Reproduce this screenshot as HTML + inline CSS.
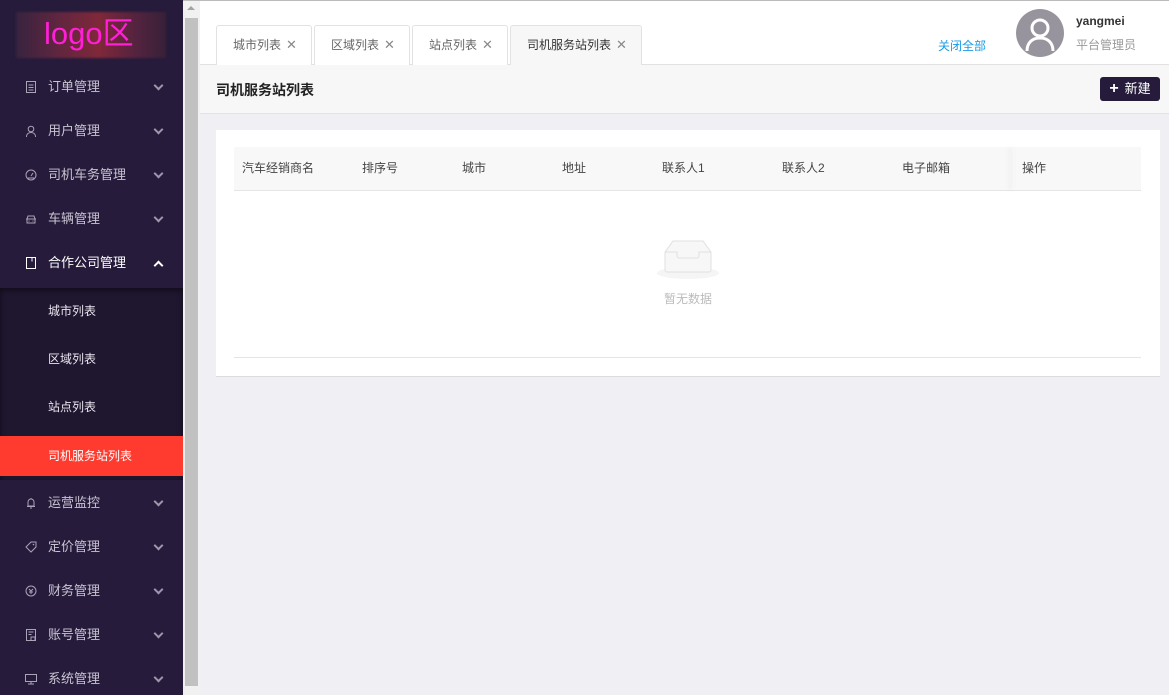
<!DOCTYPE html>
<html><head><meta charset="utf-8"><style>
*{margin:0;padding:0;box-sizing:border-box}
html,body{width:1169px;height:695px;overflow:hidden}
body{background:#f0f0f4;font-family:"Liberation Sans","Noto Sans CJK SC",sans-serif;font-size:13px;position:relative}
.a{position:absolute}
#side{left:0;top:0;width:183px;height:695px;background:#261b3b}
.mi{position:absolute;left:0;width:183px;height:44px;line-height:44px;color:#c8c4d2;font-size:13px}
.mi .t{position:absolute;left:48px}
.mi .ic{position:absolute;left:25px;top:16px;width:12px;height:12px}
.mi .ch{position:absolute;left:155px;top:17px;width:7px;height:7px;border-right:2px solid #9d96ad;border-bottom:2px solid #9d96ad;transform:rotate(45deg)}
.si{position:absolute;left:0;width:183px;height:48px;line-height:48px;color:#e8e6ee;font-size:12px;padding-left:48px}
.tab{position:absolute;top:25px;height:40px;border:1px solid #e2e2e2;border-bottom:none;border-radius:3px 3px 0 0;background:#fff;line-height:38px;color:#666;font-size:12px;padding-left:16px}
.tab .x{color:#888;font-size:13px;margin-left:5px}
.th{position:absolute;top:0;line-height:43px;color:#444;font-size:12px}
</style></head><body>
<div class="a" style="left:0;top:0;width:1169px;height:1px;background:#bbb"></div>
<div id="side" class="a">
 <div class="a" style="left:16px;top:12px;width:150px;height:46px;background:linear-gradient(90deg,#3a2540,#6a2840 30%,#8a2a3a 55%,#5a2440 80%,#3a2238);filter:blur(1px);opacity:.9"></div>
 <div class="a" style="left:44px;top:14px;color:#ff1fd6;font-size:31px;line-height:40px">logo区</div>
 <div class="mi" style="top:65px"><svg class="ic" viewBox="0 0 12 12"><rect x="1.5" y=".5" width="9" height="11" fill="none" stroke="#aaa4b8"/><path d="M3.5 4h5M3.5 6.5h5M3.5 9h5" stroke="#aaa4b8"/></svg><span class="t">订单管理</span><i class="ch"></i></div>
 <div class="mi" style="top:109px"><svg class="ic" viewBox="0 0 12 12"><circle cx="6" cy="4" r="2.8" fill="none" stroke="#aaa4b8"/><path d="M1.5 12c0-3 2-4.5 4.5-4.5S10.5 9 10.5 12" fill="none" stroke="#aaa4b8"/></svg><span class="t">用户管理</span><i class="ch"></i></div>
 <div class="mi" style="top:153px"><svg class="ic" viewBox="0 0 12 12"><circle cx="6" cy="6" r="5" fill="none" stroke="#aaa4b8"/><path d="M6 7L8 4M3 9h6" stroke="#aaa4b8"/></svg><span class="t">司机车务管理</span><i class="ch"></i></div>
 <div class="mi" style="top:197px"><svg class="ic" viewBox="0 0 12 12"><path d="M2 6l1-3h6l1 3v4H2zM1 6h10M3.5 8h1M7.5 8h1" fill="none" stroke="#aaa4b8"/></svg><span class="t">车辆管理</span><i class="ch"></i></div>
 <div class="mi" style="top:241px;color:#fff"><svg class="ic" viewBox="0 0 12 12"><rect x="1.5" y=".5" width="9" height="11" fill="none" stroke="#fff"/><path d="M7 .5v4" stroke="#fff"/></svg><span class="t">合作公司管理</span><i class="ch" style="top:21px;transform:rotate(225deg);border-color:#fff"></i></div>
 <div class="a" style="left:0;top:288px;width:183px;height:192px;background:#1f1630;box-shadow:inset 0 2px 6px rgba(0,0,0,.5)"></div>
 <div class="si" style="top:287px">城市列表</div>
 <div class="si" style="top:335px">区域列表</div>
 <div class="si" style="top:383px">站点列表</div>
 <div class="si" style="top:436px;height:40px;line-height:40px;background:#ff3b2f;color:#fff">司机服务站列表</div>
 <div class="mi" style="top:481px"><svg class="ic" viewBox="0 0 12 12"><path d="M3 9V5a3 3 0 016 0v4zM2 9.5h8M5 11h2M6 1v1" fill="none" stroke="#aaa4b8"/></svg><span class="t">运营监控</span><i class="ch"></i></div>
 <div class="mi" style="top:525px"><svg class="ic" viewBox="0 0 12 12"><path d="M6 1h5v5l-5 5-5-5z" fill="none" stroke="#aaa4b8"/><circle cx="8.5" cy="3.5" r=".8" fill="#aaa4b8"/></svg><span class="t">定价管理</span><i class="ch"></i></div>
 <div class="mi" style="top:569px"><svg class="ic" viewBox="0 0 12 12"><circle cx="6" cy="6" r="5" fill="none" stroke="#aaa4b8"/><path d="M4 4l2 2 2-2M6 6v3M4 7h4" fill="none" stroke="#aaa4b8"/></svg><span class="t">财务管理</span><i class="ch"></i></div>
 <div class="mi" style="top:613px"><svg class="ic" viewBox="0 0 12 12"><rect x="1.5" y=".5" width="9" height="11" fill="none" stroke="#aaa4b8"/><path d="M3.5 3h5M3.5 5.5h3M6 8h4v3.5H6z" fill="none" stroke="#aaa4b8"/></svg><span class="t">账号管理</span><i class="ch"></i></div>
 <div class="mi" style="top:657px"><svg class="ic" viewBox="0 0 12 12"><rect x=".5" y="1.5" width="11" height="7" fill="none" stroke="#aaa4b8"/><path d="M6 8.5v2M3 11h6" stroke="#aaa4b8"/></svg><span class="t">系统管理</span><i class="ch"></i></div>
</div>
<div class="a" style="left:183px;top:1px;width:17px;height:694px;background:#f1f1f1"></div>
<div class="a" style="left:185px;top:18px;width:13px;height:668px;background:#c1c1c1"></div>
<div class="a" style="left:187px;top:6px;width:0;height:0;border-left:4px solid transparent;border-right:4px solid transparent;border-bottom:4px solid #a3a3a3"></div>

<div class="a" style="left:200px;top:1px;width:969px;height:64px;background:#fff;border-bottom:1px solid #e2e2e2"></div>
<div class="tab" style="left:216px;width:96px">城市列表<span class="x">✕</span></div>
<div class="tab" style="left:314px;width:96px">区域列表<span class="x">✕</span></div>
<div class="tab" style="left:412px;width:96px">站点列表<span class="x">✕</span></div>
<div class="tab" style="left:510px;width:132px;background:#f7f7f7;color:#333;height:41px">司机服务站列表<span class="x">✕</span></div>
<div class="a" style="left:938px;top:37px;color:#1a9be6;font-size:12px">关闭全部</div>
<div class="a" style="left:1016px;top:9px;width:48px;height:48px;border-radius:50%;background:#98949e;overflow:hidden"><svg width="48" height="48" viewBox="0 0 48 48"><circle cx="24" cy="19" r="8" fill="none" stroke="#fff" stroke-width="3"/><path d="M11 42c0-9 6-13 13-13s13 4 13 13" fill="none" stroke="#fff" stroke-width="3"/></svg></div>
<div class="a" style="left:1076px;top:14px;color:#333;font-weight:bold;font-size:12px">yangmei</div>
<div class="a" style="left:1076px;top:36px;color:#999;font-size:12px">平台管理员</div>

<div class="a" style="left:200px;top:65px;width:969px;height:49px;background:#f7f7f7;border-bottom:1px solid #e2e2e2"></div>
<div class="a" style="left:216px;top:80px;color:#222;font-weight:bold;font-size:14px">司机服务站列表</div>
<div class="a" style="left:1100px;top:77px;width:60px;height:24px;background:#261b3b;border-radius:3px;color:#fff;font-size:13px;line-height:24px;text-align:center"><b style="font-size:16px;margin-right:6px">+</b>新建</div>

<div class="a" style="left:216px;top:130px;width:944px;height:247px;background:#fff;border-bottom:1px solid #dcdce0">
 <div class="a" style="left:18px;top:17px;width:907px;height:44px;background:#f8f8f8;border-bottom:1px solid #e5e5e5">
  <div class="th" style="left:8px">汽车经销商名</div>
  <div class="th" style="left:128px">排序号</div>
  <div class="th" style="left:228px">城市</div>
  <div class="th" style="left:328px">地址</div>
  <div class="th" style="left:428px">联系人1</div>
  <div class="th" style="left:548px">联系人2</div>
  <div class="th" style="left:668px">电子邮箱</div>
  <div class="a" style="left:779px;top:0;width:1px;height:43px;box-shadow:-3px 0 6px rgba(0,0,0,.15)"></div>
  <div class="th" style="left:788px">操作</div>
 </div>
 <svg class="a" style="left:440px;top:108px" width="64" height="44" viewBox="0 0 64 44"><ellipse cx="32" cy="35" rx="31" ry="6" fill="#f5f5f5"/><path d="M9 14l8-11h30l8 11v18a2 2 0 01-2 2H11a2 2 0 01-2-2z" fill="#f7f7f7" stroke="#e0e0e0"/><path d="M9 14h12v4a2 2 0 002 2h18a2 2 0 002-2v-4h12" fill="none" stroke="#e0e0e0"/></svg>
 <div class="a" style="left:448px;top:160px;color:#bbb;font-size:12px">暂无数据</div>
 <div class="a" style="left:18px;top:227px;width:907px;height:1px;background:#e5e5e5"></div>
</div>
</body></html>
